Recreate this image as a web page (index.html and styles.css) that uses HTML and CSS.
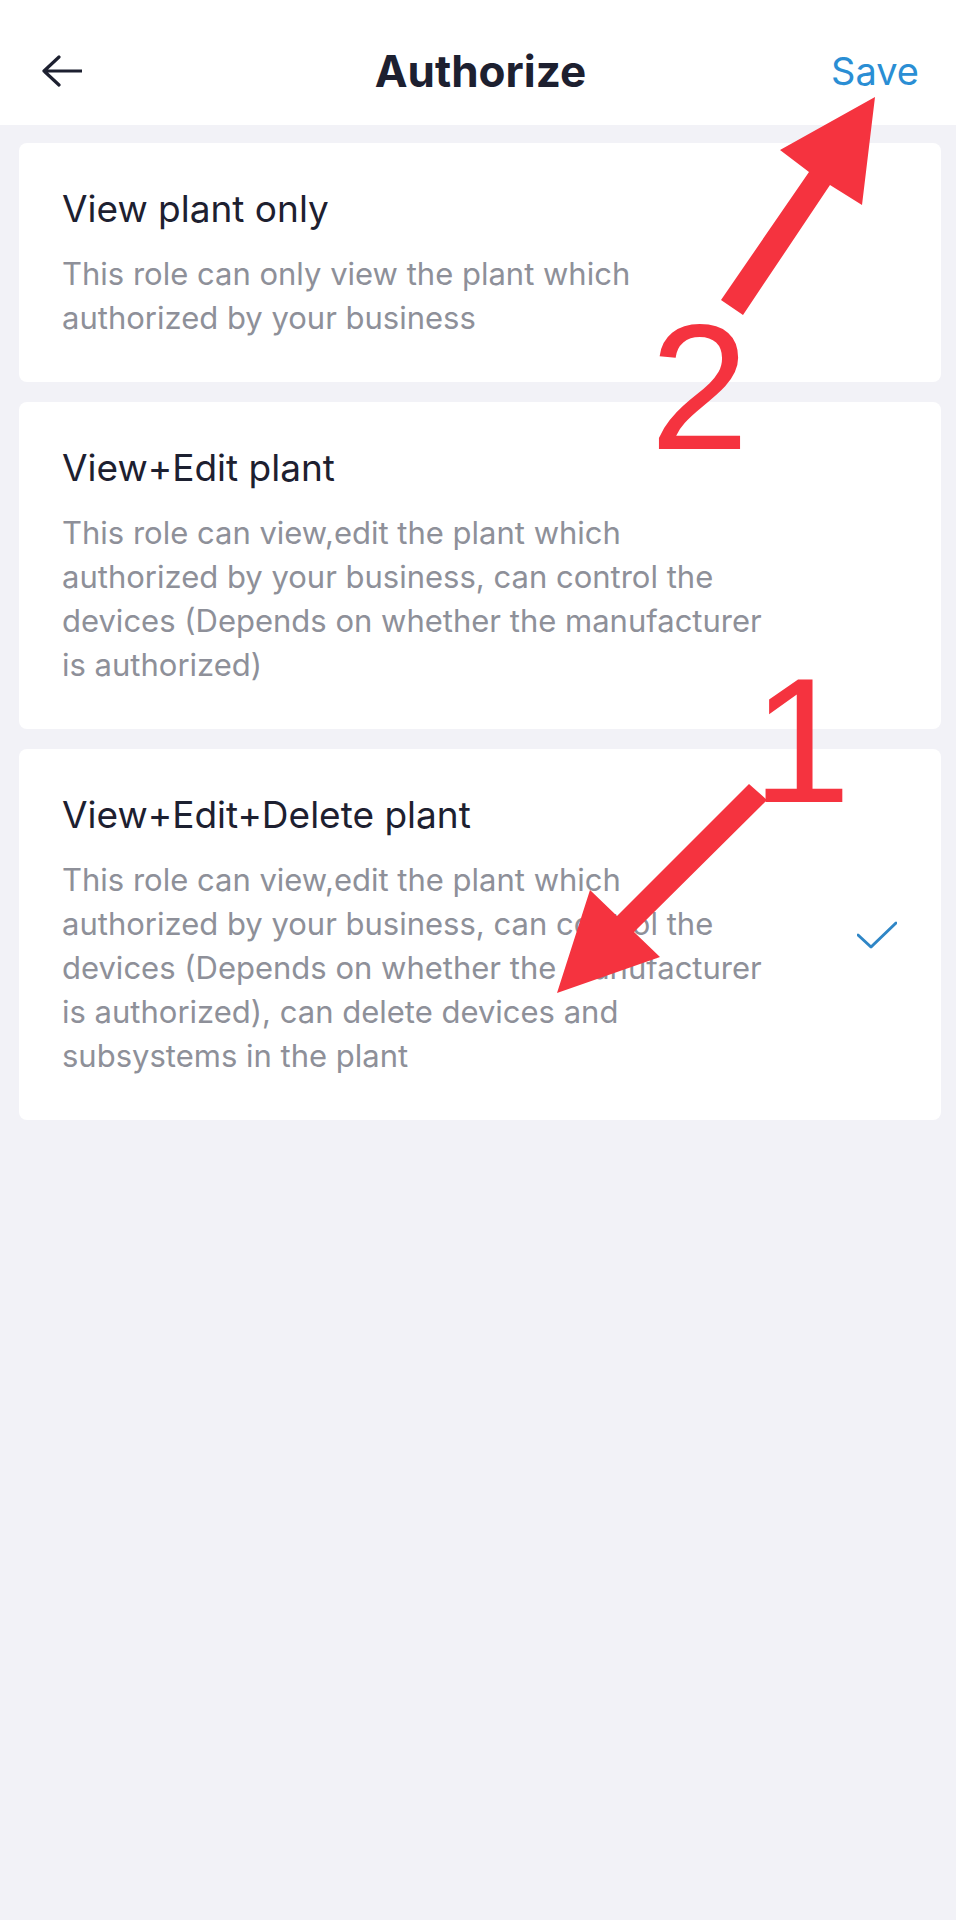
FILE: index.html
```html
<!DOCTYPE html>
<html lang="en">
<head>
    <meta charset="UTF-8">
    <meta name="viewport" content="width=device-width, initial-scale=1.0">
    <title>Authorize</title>
    <link rel="stylesheet" href="styles.css">
</head>
<body>
    <div class="page">
        <header class="topbar">
            <button class="back" aria-label="Back">
                <svg width="40" height="32" viewBox="0 0 40 32">
                    <path d="M2 16H40M17 2L2 16L17 30" fill="none" stroke="#1d2030" stroke-width="3.2" stroke-linecap="round" stroke-linejoin="round"/>
                </svg>
            </button>
            <h1>Authorize</h1>
            <button class="save">Save</button>
        </header>

        <div class="roles">
            <div class="card">
                <div class="card-text">
                    <h2>View plant only</h2>
                    <p>This role can only view the plant which authorized by your business</p>
                </div>
            </div>
            <div class="card">
                <div class="card-text">
                    <h2>View+Edit plant</h2>
                    <p>This role can view,edit the plant which authorized by your business, can control the devices (Depends on whether the manufacturer is authorized)</p>
                </div>
            </div>
            <div class="card selected">
                <div class="card-text">
                    <h2>View+Edit+Delete plant</h2>
                    <p>This role can view,edit the plant which authorized by your business, can control the devices (Depends on whether the manufacturer is authorized), can delete devices and subsystems in the plant</p>
                </div>
                <svg class="check" width="40" height="30" viewBox="0 0 40 30">
                    <path d="M1 14L14 26L39 2" fill="none" stroke="#2f86c6" stroke-width="3" stroke-linecap="round" stroke-linejoin="round"/>
                </svg>
            </div>
        </div>

        <!-- markup drawn on top of the screenshot -->
        <svg class="marks" width="956" height="1130" viewBox="0 0 956 1130">
            <polygon points="721,300 809,172 780,150 875,97 862,205 830,185 743,315" fill="#f5333f"/>
            <polygon points="749,784 767,800 634,932 660,957 557,993 590,890 617,916" fill="#f5333f"/>
            <text x="650" y="449" class="mark-num">2</text>
            <text x="752" y="802" class="mark-num">1</text>
        </svg>
    </div>
</body>
</html>
```

FILE: styles.css
```css
body {
    margin: 0;
    background: #f2f2f7;
    font-family: 'Inter', 'Liberation Sans', sans-serif;
    color: #1d2030;
}
.page {
    position: relative;
    width: 956px;
}
.topbar {
    display: flex;
    align-items: center;
    justify-content: space-between;
    height: 125px;
    padding: 16px 37px 0 42px;
    background: #fff;
    box-sizing: border-box;
}
.topbar h1 {
    margin: 0;
    font-size: 44px;
    font-weight: 700;
}
.back,
.save {
    background: none;
    border: none;
    padding: 0;
    cursor: pointer;
    font-family: inherit;
}
.back {
    width: 88px;
    text-align: left;
    line-height: 0;
}
.save {
    width: 88px;
    text-align: right;
    font-size: 38px;
    color: #2a8ed4;
}
.roles {
    display: flex;
    flex-direction: column;
    gap: 20px;
    padding: 18px 15px 0 19px;
}
.card {
    display: flex;
    align-items: center;
    background: #fff;
    border-radius: 8px;
    padding: 44px 44px 42px 43px;
}
.card-text {
    flex: 1;
    max-width: 714px;
}
.card h2 {
    margin: 0;
    font-size: 37px;
    font-weight: 400;
    line-height: 44px;
}
.card p {
    margin: 21px 0 0;
    font-size: 31px;
    line-height: 44px;
    color: #8e9099;
}
.check {
    margin-left: auto;
}
.marks {
    position: absolute;
    top: 0;
    left: 0;
    pointer-events: none;
}
.mark-num {
    font-family: 'Liberation Sans', sans-serif;
    font-size: 178px;
    fill: #f5333f;
}
```
